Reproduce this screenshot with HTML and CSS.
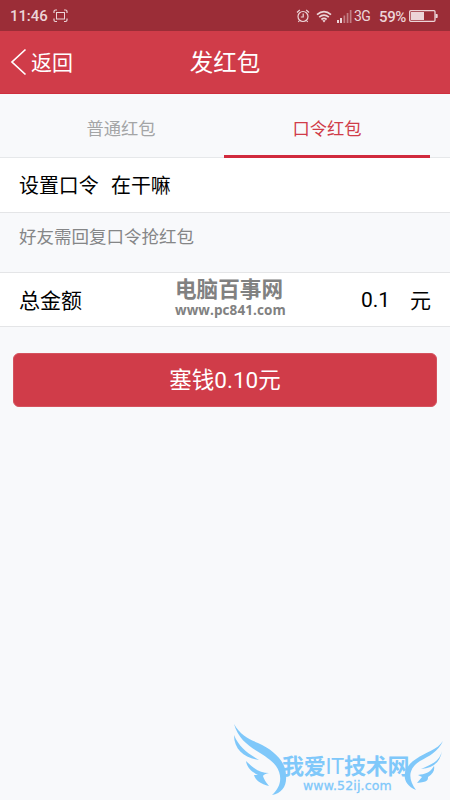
FILE: index.html
```html
<!DOCTYPE html>
<html lang="zh-CN">
<head>
<meta charset="utf-8">
<title>发红包</title>
<link rel="stylesheet" href="styles.css">
</head>
<body>
<div class="screen">
  <div class="status">
    <span class="time">11:46</span>
    <svg class="shot" width="16" height="14" viewBox="0 0 16 14" fill="none" stroke="currentColor"><path d="M1 4V2.500Q1 1 2.500 1H4M11 1h1.500Q14 1 14 2.500V4M14 9.500v1.500q0 1.500-1.500 1.500H11M4 12.500H2.500Q1 12.500 1 11V9.500" stroke-width="1.200"/><rect x="3.500" y="3.500" width="8" height="6.500"/></svg>
    <span class="grow"></span>
    <svg class="alarm" width="14" height="14" viewBox="0 0 14 14" fill="none" stroke="currentColor" stroke-width="1.200"><circle cx="7" cy="7.500" r="5"/><path d="M1 3.500 3.800 1M13 3.500 10.200 1M7.200 4.500V8H4.800M3.500 11.500 2.300 13M10.500 11.500l1.200 1.500"/></svg>
    <svg class="wifi" width="16" height="13" viewBox="0 0 16 13" fill="none" stroke="currentColor" stroke-width="1.700"><path d="M1 4.700Q8-1.500 15 4.700M3.200 7.200Q8 3 12.800 7.200M5.400 9.500Q8 7.300 10.600 9.500"/><path d="M6.300 10.600Q8 9.500 9.700 10.600L8 12.500Z" fill="currentColor" stroke="none"/></svg>
    <svg class="signal" width="15" height="13" viewBox="0 0 15 13" fill="currentColor"><path d="M0 10h2v3H0zM3 8h2v5H3z"/><path d="M6.500 5.500h1.700V13H6.500zM9.700 3h1.700v10H9.700zM12.800 0h1.700v13h-1.700z" opacity=".48"/></svg>
    <span class="net">3G</span>
    <span class="percent">59%</span>
    <svg class="battery" width="29" height="12" viewBox="0 0 29 12"><rect x=".7" y=".7" width="25.300" height="10.600" rx="1" fill="none" stroke="currentColor" stroke-width="1.300"/><path d="M2 2h13v8H2zM26.500 4H28q.7 0 .7.700v2.600q0 .7-.7.700h-1.500z" fill="currentColor"/></svg>
  </div>
  <header class="header">
    <a class="back"><svg width="17" height="28" viewBox="0 0 17 28" fill="none" stroke="currentColor" stroke-width="1.700"><path d="M15.500 1.500 2 14l13.500 12.500"/></svg><span>返回</span></a>
    <h1>发红包</h1>
  </header>
  <nav class="tabs">
    <a class="tab">普通红包</a>
    <a class="tab active">口令红包</a>
  </nav>
  <div class="row phrase"><span class="label">设置口令</span><span>在干嘛</span></div>
  <p class="note">好友需回复口令抢红包</p>
  <div class="row amount">
    <span class="label">总金额</span><span class="value">0.1</span><span class="unit">元</span>
    <div class="stamp"><b>电脑百事网</b><span>www.pc841.com</span></div>
  </div>
  <button class="submit">塞钱0.10元</button>
  <div class="brand">
    <svg width="216" height="80" viewBox="0 0 216 80" fill="currentColor"><path d="M4 4C10 15 19 19 28 23C44 30 56 42 56 55C57 66 52 73 42 75C51 67 53 56 46 46C36 32 11 29 4 4Z"/><path d="M4 15C9 27 17 33 29 40C15 38 4 30 4 15ZM16 41C23 48 30 53 39 53Q34 54 33 56Q34 60 39 66C31 64 25 60 24 55L28 55C22 52 17 48 16 41Z"/><path d="M213 21C208 32 199 36 190 41C179 48 177 58 186 70C169 63 173 47 186 39C196 32 207 30 213 21Z"/><path d="M212 31C209 42 202 44 191 49Q209 48 212 31ZM204 46C200 53 195 54 188 55L192 57L187 63C198 62 198 60 198 57C203 54 205 50 204 46Z"/></svg>
    <b>我爱<i>IT</i>技术网</b><span>www.52ij.com</span>
  </div>
</div>
</body>
</html>
```

FILE: styles.css
```css
* { box-sizing: border-box; }
body { margin: 0; font-family: Roboto, "Noto Sans CJK SC", sans-serif; }
.screen { position: relative; width: 450px; height: 800px; overflow: hidden; background: #f8f9fb; color: #000; }
.status { display: flex; align-items: center; height: 31px; padding: 1px 12px 0 10px; background: #9b2d37; color: #ecd5d8; font-size: 15px; line-height: 30px; }
.status svg { flex: none; }
.time { width: 38px; font-weight: 500; letter-spacing: -.1px; }
.shot { margin-left: 5px; }
.grow { flex: 1; }
.alarm { margin-right: 6px; }
.wifi { margin-right: 5px; }
.signal { margin-right: 2px; }
.net { width: 25px; font-size: 14px; letter-spacing: -.6px; }
.percent { width: 30px; padding-top: 2px; font-weight: 500; font-size: 15px; letter-spacing: -.4px; }
.header { display: grid; grid-template-columns: 1fr auto 1fr; align-items: center; height: 63px; padding: 0 10px; background: #d03c49; border-bottom: 1px solid #cf2f3e; color: #fff; }
.back { display: flex; align-items: center; gap: 4px; font-size: 21px; line-height: 30px; }
.back span { padding-top: 1px; }
.header h1 { margin: 0; padding-top: 2px; font-size: 23.500px; font-weight: 400; line-height: 34px; }
.tabs { display: flex; height: 64px; padding: 0 20px 0 18px; border-bottom: 1px solid #e6e8ea; }
.tab { flex: 1; height: 63px; padding-top: 6px; line-height: 59px; text-align: center; color: #a4a5a6; font-size: 17.300px; }
.tab.active { color: #d03c49; border-bottom: 3px solid #d12a3d; height: 64px; }
.row { display: flex; align-items: center; height: 55px; padding: 0 19px 1px; background: #fff; border-bottom: 1px solid #e4e5e7; }
.phrase { font-size: 19.900px; }
.phrase .label { width: 92px; }
.note { margin: 0; height: 60px; padding: 11px 19px 0; font-size: 17.500px; line-height: 26px; color: #858687; border-bottom: 1px solid #e4e5e7; }
.amount { position: relative; height: 54px; padding-bottom: 2px; font-size: 21px; }
.amount .label { flex: 1; }
.value { width: 49px; padding-top: 2px; }
.stamp { position: absolute; left: 175px; top: 5px; color: #818181; display: flex; flex-direction: column; white-space: nowrap; }
.stamp b { font-size: 21.600px; line-height: 24px; }
.stamp span { font: 700 13.500px/16px "Open Sans", sans-serif; letter-spacing: .1px; }
.submit { display: block; width: 424px; height: 54px; margin: 26px 13px 0; padding: 1px 0 0; border: 1px solid #d5535e; border-radius: 6px; background: #d03c49; color: #fff; font: inherit; font-size: 22.500px; line-height: 51px; }
.brand { position: absolute; left: 230px; top: 720px; width: 216px; height: 80px; color: #7fc8fa; white-space: nowrap; }
.brand svg { position: absolute; left: 0; top: 0; }
.brand b { position: absolute; left: 52px; top: 36px; font-size: 22px; font-weight: 700; line-height: 22px; letter-spacing: -.2px; }
.brand i { font-style: normal; font-weight: 400; }
.brand span { position: absolute; left: 73px; top: 58px; font: 400 12.500px/15px "DejaVu Sans", sans-serif; letter-spacing: .15px; -webkit-text-stroke: .3px currentColor; }
```
